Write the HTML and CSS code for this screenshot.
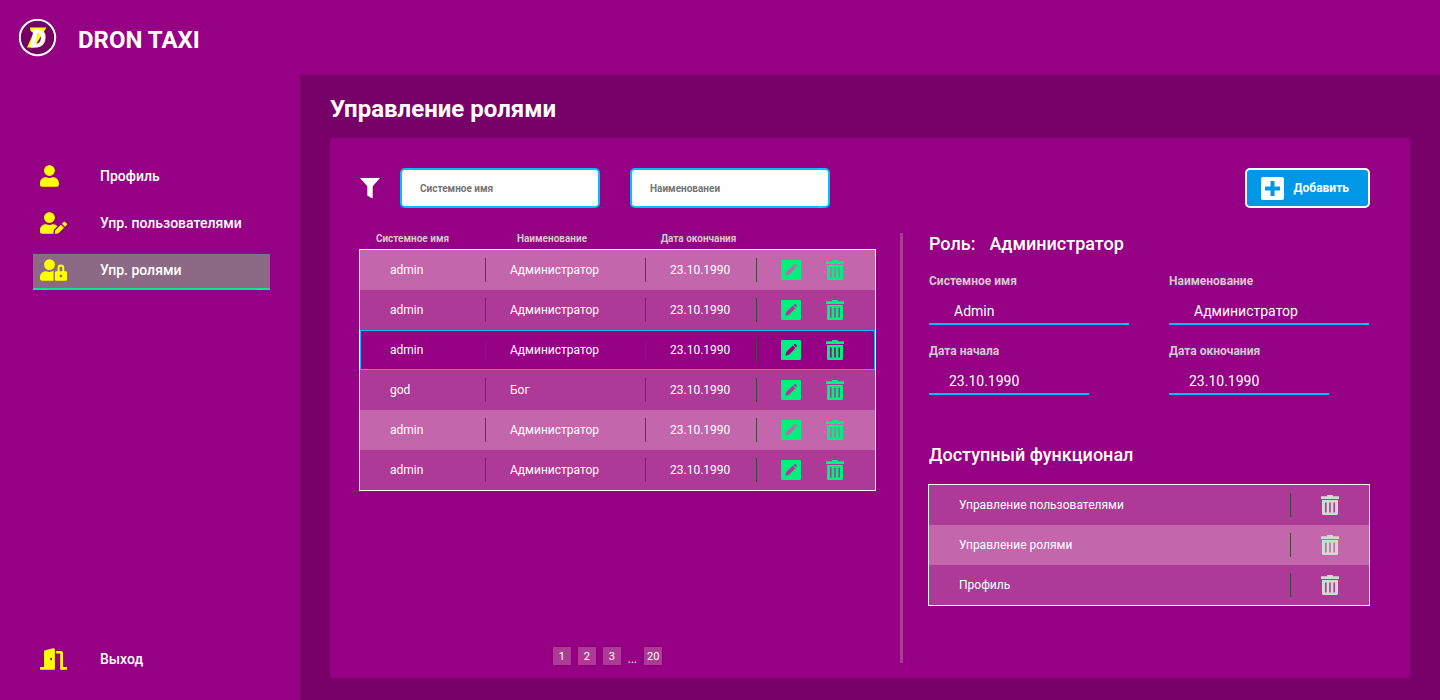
FILE: index.html
```html
<!DOCTYPE html>
<html lang="ru">
<head>
<meta charset="utf-8">
<title>Dron Taxi — Управление ролями</title>
<link rel="stylesheet" href="styles.css">
</head>
<body>
<svg class="sprite" aria-hidden="true">
  <symbol id="edit" viewBox="0 0 20 20">
    <path fill-rule="evenodd" d="M1.2 0h17.6Q20 0 20 1.200v17.600Q20 20 18.800 20H1.200Q0 20 0 18.800V1.200Q0 0 1.200 0zM4.300 15.700l1-3.700 6.500-6.400 2.700 2.700-6.500 6.400zM12.600 4.900l.9-.8q.6-.4 1.200.1l1.200 1.200q.4.600 0 1.100l-.8.9z"/>
  </symbol>
  <symbol id="trash" viewBox="0 0 18 20">
    <path d="M0 1.200h6V.6Q6 0 6.600 0h4.800q.6 0 .6.600v.6h6V4H0z"/>
    <path fill-rule="evenodd" d="M1 5h16v13.500q0 1.500-1.500 1.500h-13Q1 20 1 18.500zM4 7.500v10h1.600v-10zM8.200 7.500v10h1.600v-10zM12.400 7.500v10H14v-10z"/>
  </symbol>
</svg>

<header class="topbar">
  <svg class="logo" viewBox="0 0 38 38" aria-hidden="true">
    <circle class="logo-disc" cx="18.500" cy="18.500" r="17.700"/>
    <path class="logo-mark" d="M11 8.500H27.500L15 28.500H8l6.500-14.500-3-2z"/>
    <text class="logo-letter" x="12" y="28">D</text>
  </svg>
  <span class="brand">DRON TAXI</span>
</header>

<div class="shell">
  <nav class="sidebar">
    <a class="nav-item" href="#profile">
      <svg class="nav-icon" viewBox="0 0 640 512" aria-hidden="true"><path d="M224 256c70.700 0 128-57.300 128-128S294.700 0 224 0 96 57.300 96 128s57.300 128 128 128zm89.600 32h-16.700c-22.200 10.200-46.900 16-72.900 16s-50.600-5.800-72.900-16h-16.700C60.200 288 0 348.200 0 422.400V464c0 26.500 21.500 48 48 48h352c26.500 0 48-21.500 48-48v-41.600c0-74.200-60.200-134.400-134.400-134.400z"/></svg>
      Профиль
    </a>
    <a class="nav-item" href="#users">
      <svg class="nav-icon" viewBox="0 0 640 512" aria-hidden="true"><path d="M224 256c70.700 0 128-57.300 128-128S294.700 0 224 0 96 57.300 96 128s57.300 128 128 128zm89.600 32h-16.700c-22.200 10.200-46.900 16-72.900 16s-50.600-5.800-72.900-16h-16.700C60.200 288 0 348.200 0 422.400V464c0 26.500 21.500 48 48 48h274.900c-2.400-6.800-3.400-14-2.600-21.300l6.800-60.900 1.200-11.100 7.900-7.900 77.300-77.300c-24.500-27.700-60-45.500-99.900-45.500zm45.300 145.300l-6.800 61c-1.100 10.200 7.500 18.800 17.600 17.600l60.900-6.800 137.900-137.900-71.700-71.700-137.900 137.800zM633 268.900L595.100 231c-9.300-9.300-24.500-9.300-33.800 0l-37.800 37.800-4.100 4.100 71.800 71.700 41.800-41.800c9.300-9.400 9.300-24.500 0-33.900z"/></svg>
      Упр. пользователями
    </a>
    <a class="nav-item nav-item--active" href="#roles" aria-current="page">
      <svg class="nav-icon" viewBox="0 0 640 512" aria-hidden="true"><path d="M224 256A128 128 0 1 0 96 128a128 128 0 0 0 128 128zm96 64a63.080 63.080 0 0 1 8.100-30.500c-4.800-.5-9.500-1.500-14.500-1.500h-16.700a174.080 174.080 0 0 1-145.800 0h-16.700A134.430 134.430 0 0 0 0 422.400V464a48 48 0 0 0 48 48h280.900a63.540 63.540 0 0 1-8.900-32zm288-32h-32v-80a80 80 0 0 0-160 0v80h-32a32 32 0 0 0-32 32v160a32 32 0 0 0 32 32h224a32 32 0 0 0 32-32V320a32 32 0 0 0-32-32zM496 432a32 32 0 1 1 32-32 32 32 0 0 1-32 32zm32-144h-64v-80a32 32 0 0 1 64 0z"/></svg>
      Упр. ролями
    </a>
    <a class="nav-item nav-item--exit" href="#exit">
      <svg class="nav-icon" viewBox="0 0 640 512" aria-hidden="true"><path d="M624 448h-80V113.450C544 86.190 522.470 64 496 64H384v64h96v384h144c8.840 0 16-7.160 16-16v-32c0-8.840-7.160-16-16-16zM312.240 1.010l-192 49.740C105.990 54.440 96 67.700 96 82.920V448H16c-8.840 0-16 7.160-16 16v32c0 8.840 7.160 16 16 16h336V33.180c0-21.580-19.560-37.410-39.760-32.170zM264 288c-13.250 0-24-14.330-24-32s10.750-32 24-32 24 14.330 24 32-10.750 32-24 32z"/></svg>
      Выход
    </a>
  </nav>

  <main class="content">
    <h1 class="page-title">Управление ролями</h1>
    <div class="panel">
      <form class="toolbar">
        <svg class="filter-icon" viewBox="0 0 20 20" aria-hidden="true"><path d="M0 0h20l-7.300 8.300V20h-1.400L7.300 17.500V8.300z"/></svg>
        <input class="filter-input" type="text" placeholder="Системное имя" aria-label="Системное имя">
        <input class="filter-input" type="text" placeholder="Наименованеи" aria-label="Наименование">
        <button class="add-button" type="button">
          <svg class="add-icon" viewBox="0 0 23 23" aria-hidden="true"><path fill-rule="evenodd" d="M2 0h19q2 0 2 2v19q0 2-2 2H2q-2 0-2-2V2q0-2 2-2zM9.500 4v5.500H4v4h5.500V19h4v-5.500H19v-4h-5.500V4z"/></svg>
          Добавить
        </button>
      </form>

      <div class="columns">
        <section class="list">
          <table class="roles">
            <colgroup><col class="col-system"><col class="col-name"><col class="col-date"><col class="col-actions"></colgroup>
            <thead>
              <tr><th>Системное имя</th><th>Наименование</th><th>Дата окончания</th><td></td></tr>
            </thead>
            <tbody>
              <tr class="row-light"><td>admin</td><td>Администратор</td><td>23.10.1990</td><td><div class="actions"><button class="icon-button" aria-label="Изменить"><svg class="icon-edit"><use href="#edit"/></svg></button><button class="icon-button" aria-label="Удалить"><svg class="icon-trash"><use href="#trash"/></svg></button></div></td></tr>
              <tr><td>admin</td><td>Администратор</td><td>23.10.1990</td><td><div class="actions"><button class="icon-button" aria-label="Изменить"><svg class="icon-edit"><use href="#edit"/></svg></button><button class="icon-button" aria-label="Удалить"><svg class="icon-trash"><use href="#trash"/></svg></button></div></td></tr>
              <tr class="row-selected"><td>admin</td><td>Администратор</td><td>23.10.1990</td><td><div class="actions"><button class="icon-button" aria-label="Изменить"><svg class="icon-edit"><use href="#edit"/></svg></button><button class="icon-button" aria-label="Удалить"><svg class="icon-trash"><use href="#trash"/></svg></button></div></td></tr>
              <tr><td>god</td><td>Бог</td><td>23.10.1990</td><td><div class="actions"><button class="icon-button" aria-label="Изменить"><svg class="icon-edit"><use href="#edit"/></svg></button><button class="icon-button" aria-label="Удалить"><svg class="icon-trash"><use href="#trash"/></svg></button></div></td></tr>
              <tr class="row-light"><td>admin</td><td>Администратор</td><td>23.10.1990</td><td><div class="actions"><button class="icon-button" aria-label="Изменить"><svg class="icon-edit"><use href="#edit"/></svg></button><button class="icon-button" aria-label="Удалить"><svg class="icon-trash"><use href="#trash"/></svg></button></div></td></tr>
              <tr><td>admin</td><td>Администратор</td><td>23.10.1990</td><td><div class="actions"><button class="icon-button" aria-label="Изменить"><svg class="icon-edit"><use href="#edit"/></svg></button><button class="icon-button" aria-label="Удалить"><svg class="icon-trash"><use href="#trash"/></svg></button></div></td></tr>
            </tbody>
          </table>
          <div class="pagination">
            <button class="page">1</button>
            <button class="page">2</button>
            <button class="page">3</button>
            <span class="page-gap">...</span>
            <button class="page">20</button>
          </div>
        </section>

        <div class="divider"></div>

        <section class="details">
          <h2 class="section-title"><span>Роль:</span><span>Администратор</span></h2>
          <div class="fields">
            <div class="field"><label for="f-system">Системное имя</label><input id="f-system" type="text" value="Admin"></div>
            <div class="field"><label for="f-name">Наименование</label><input id="f-name" type="text" value="Администратор"></div>
            <div class="field field--date"><label for="f-start">Дата начала</label><input id="f-start" type="text" value="23.10.1990"></div>
            <div class="field field--date"><label for="f-end">Дата окночания</label><input id="f-end" type="text" value="23.10.1990"></div>
          </div>
          <h2 class="section-title">Доступный функционал</h2>
          <ul class="functions">
            <li><span>Управление пользователями</span><button class="icon-button" aria-label="Удалить"><svg class="icon-trash"><use href="#trash"/></svg></button></li>
            <li class="row-light"><span>Управление ролями</span><button class="icon-button" aria-label="Удалить"><svg class="icon-trash"><use href="#trash"/></svg></button></li>
            <li><span>Профиль</span><button class="icon-button" aria-label="Удалить"><svg class="icon-trash"><use href="#trash"/></svg></button></li>
          </ul>
        </section>
      </div>
    </div>
  </main>
</div>
</body>
</html>
```
FILE: styles.css
```css
:root {
  --purple: #960084;
  --purple-dark: #780069;
  --row: #ae3a98;
  --row-light: #c366ac;
  --blue: #00bfff;
  --green: #00f080;
  --rule: #444444;
  --muted: #d6c8cc;
}

* { box-sizing: border-box; }

body {
  margin: 0;
  min-height: 100vh;
  display: flex;
  flex-direction: column;
  background: var(--purple);
  color: #fff;
  font: 400 12px/16px Roboto, "Liberation Sans", sans-serif;
}

button, input { font: inherit; color: inherit; }
button { cursor: pointer; }
svg { display: block; fill: currentColor; }
.sprite { display: none; }

.topbar {
  display: flex;
  align-items: center;
  gap: 21px;
  height: 75px;
  padding: 0 19px;
}
.logo { width: 38px; height: 38px; }
.logo-disc { fill: #740065; stroke: #fff; stroke-width: 2px; }
.logo-mark { fill: #ff0; }
.logo-letter {
  font: italic 700 23px Roboto, "Liberation Sans", sans-serif;
  fill: #fff;
  stroke: #fff;
  stroke-width: 1px;
}
.brand { font-size: 24px; line-height: 28px; font-weight: 700; padding-top: 4px; }

.shell { flex: 1; display: flex; }

.sidebar {
  flex: 0 0 300px;
  display: flex;
  flex-direction: column;
  gap: 11px;
  padding: 85px 30px 21px 33px;
}
.nav-item {
  display: flex;
  align-items: center;
  gap: 33px;
  height: 36px;
  padding: 0 7px 2px;
  border-bottom: 2px solid transparent;
  color: #fff;
  font-size: 14px;
  font-weight: 500;
  text-decoration: none;
}
.nav-item--active { background: #8c6984; border-color: var(--green); }
.nav-item--exit { margin-top: auto; }
.nav-icon { width: 27px; height: 22px; fill: #ff0; }

.content {
  flex: 1;
  min-width: 0;
  display: flex;
  flex-direction: column;
  padding: 20px 30px 22px;
  background: var(--purple-dark);
}
.page-title { margin: 0 0 15px; font-size: 24px; line-height: 28px; font-weight: 700; }

.panel {
  flex: 1;
  display: flex;
  flex-direction: column;
  gap: 25px;
  padding: 30px 40px 13px 29px;
  background: var(--purple);
}

.toolbar { display: flex; align-items: center; padding-left: 1px; }
.filter-icon { width: 20px; height: 20px; margin-right: 20px; }
.filter-input {
  width: 200px;
  height: 40px;
  margin-right: 30px;
  padding: 0 18px;
  border: 2px solid var(--blue);
  border-radius: 5px;
  background: #fff;
  color: #444;
  font-size: 10px;
  font-weight: 700;
}
.filter-input::placeholder { color: #757575; }
.add-button {
  display: flex;
  align-items: center;
  gap: 10px;
  height: 40px;
  margin-left: auto;
  padding: 0 19px 0 14px;
  border: 2px solid #fff;
  border-radius: 5px;
  background: #0097e6;
  font-weight: 700;
}
.add-icon { width: 23px; height: 23px; }

.columns {
  flex: 1;
  display: grid;
  grid-template-columns: minmax(0, 541fr) 3px minmax(0, 467fr);
}
.divider { margin-bottom: 2px; background: var(--row); }

.list { display: flex; flex-direction: column; justify-content: space-between; padding-right: 24px; }
.roles { width: 100%; table-layout: fixed; border-spacing: 0; }
.col-system { width: 127px; }
.col-name { width: 160px; }
.col-date { width: 111px; }
.roles thead th, .roles thead td { height: 16px; padding: 0; }
.roles th {
  color: var(--muted);
  font-size: 10px;
  line-height: 12px;
  font-weight: 700;
  text-align: center;
  vertical-align: top;
  white-space: nowrap;
}
.roles thead th:first-child { padding-right: 20px; }
.roles thead th:nth-child(2) { padding-right: 28px; }
.roles thead th:nth-child(3) { padding-right: 6px; }
.roles tbody td {
  height: 40px;
  padding: 0 0 0 24px;
  background: linear-gradient(var(--rule), var(--rule)) right center / 1px 24px no-repeat var(--row);
}
.roles tbody td:first-child { padding-left: 30px; border-left: 1px solid #fff; }
.roles tbody td:last-child { border-right: 1px solid #fff; background-image: none; }
.roles tbody tr:first-child td { height: 41px; border-top: 1px solid #fff; }
.roles tbody tr:last-child td { height: 41px; border-bottom: 1px solid #fff; }
.roles tbody .row-light td { background-color: var(--row-light); }
.roles tbody .row-selected td {
  background-color: var(--purple);
  box-shadow: inset 0 1px var(--blue), inset 0 -1px var(--blue);
}
.roles tbody .row-selected td:first-child { box-shadow: inset 0 1px var(--blue), inset 0 -1px var(--blue), inset 1px 0 var(--blue); }
.roles tbody .row-selected td:last-child { box-shadow: inset 0 1px var(--blue), inset 0 -1px var(--blue), inset -1px 0 var(--blue); }

.actions { display: flex; gap: 25px; }
.icon-button { padding: 0; border: 0; background: none; color: var(--green); }
.icon-edit { width: 20px; height: 20px; }
.icon-trash { width: 18px; height: 20px; }

.pagination {
  display: flex;
  justify-content: center;
  align-items: flex-end;
  gap: 7px;
  padding-right: 20px;
}
.page {
  min-width: 18px;
  height: 18px;
  padding: 2px 2px 0;
  border: 0;
  background: var(--row);
  box-shadow: 0 0 2px #7a006c;
  font-size: 11px;
  line-height: 16px;
}
.page-gap { line-height: 12px; }

.details { padding-left: 25px; }
.section-title {
  display: flex;
  gap: 14px;
  margin: 0;
  padding-left: 1px;
  font-size: 18px;
  line-height: 22px;
  font-weight: 500;
}
.fields {
  display: grid;
  grid-template-columns: repeat(2, minmax(0, 200px));
  column-gap: 40px;
  row-gap: 18px;
  padding: 18px 0 49px 1px;
}
.field label {
  display: block;
  color: var(--muted);
  line-height: 16px;
  font-weight: 700;
}
.field input {
  display: block;
  width: 100%;
  height: 36px;
  padding: 10px 0 0 25px;
  border: 0;
  border-bottom: 2px solid var(--blue);
  background: none;
  font-size: 14px;
}
.field--date input { width: 80%; padding-left: 20px; }

.functions { margin: 18px 0 0; padding: 0; border: 1px solid #fff; list-style: none; }
.functions li {
  display: flex;
  align-items: center;
  justify-content: space-between;
  height: 40px;
  padding-left: 30px;
  background: var(--row);
}
.functions .row-light { background: var(--row-light); }
.functions .icon-button {
  height: 24px;
  padding: 0 30px;
  border-left: 1px solid var(--rule);
  color: #d3dad3;
}
```
